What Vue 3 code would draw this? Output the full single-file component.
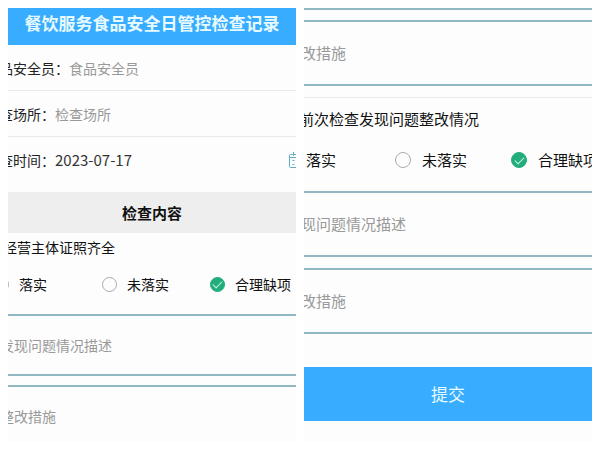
<template>
  <main class="page">
    <form class="panel" @submit.prevent>
      <h1 class="title">餐饮服务食品安全日管控检查记录</h1>

      <div v-for="f in fields" :key="f.id" class="field">
        <label :for="f.id">{{ f.label }}：</label>
        <input :id="f.id" v-model="form[f.id]" type="text" :placeholder="f.label" />
      </div>
      <div class="field date">
        <label for="fecha">检查时间：</label>
        <input id="fecha" v-model="form.fecha" type="text" />
        <button type="button" class="cal" aria-label="选择日期">
          <svg viewBox="0 0 16 18" width="16" height="18" fill="none" stroke="#62adc0">
            <path d="M4.5 3.5H2.5a1 1 0 0 0-1 1v11a1 1 0 0 0 1 1h11a1 1 0 0 0 1-1v-11a1 1 0 0 0-1-1h-9" />
            <path d="M1.5 6.5h13M5.5 1v4M10.5 1v4" />
            <path d="M4.5 9.5h2M8 9.5h2M11 9.5h2M4.5 13.5h2M8 13.5h2M11 13.5h2" />
          </svg>
        </button>
      </div>

      <h2 class="band">检查内容</h2>

      <fieldset class="item">
        <legend>经营主体证照齐全</legend>
        <div class="options">
          <label v-for="o in options" :key="o">
            <input v-model="form.licencia" type="radio" name="licencia" :value="o" />{{ o }}
          </label>
        </div>
      </fieldset>
      <textarea v-model="form.problema1" class="note" rows="1" placeholder="发现问题情况描述" aria-label="发现问题情况描述"></textarea>
      <textarea v-model="form.medida1" class="note" rows="1" placeholder="整改措施" aria-label="整改措施"></textarea>
    </form>

    <form class="panel large" @submit.prevent>
      <div class="edge"></div>
      <textarea v-model="form.medida2" class="note" rows="1" placeholder="整改措施" aria-label="整改措施"></textarea>

      <div class="ruled">
        <fieldset class="item">
          <legend>前次检查发现问题整改情况</legend>
          <div class="options">
            <label v-for="o in options" :key="o">
              <input v-model="form.anterior" type="radio" name="anterior" :value="o" />{{ o }}
            </label>
          </div>
        </fieldset>
      </div>
      <textarea v-model="form.problema3" class="note" rows="1" placeholder="发现问题情况描述" aria-label="发现问题情况描述"></textarea>
      <textarea v-model="form.medida3" class="note" rows="1" placeholder="整改措施" aria-label="整改措施"></textarea>
      <button type="submit" class="submit">提交</button>
    </form>
  </main>
</template>

<script setup>
import { reactive } from 'vue'

const fields = [
  { id: 'oficial', label: '食品安全员' },
  { id: 'lugar', label: '检查场所' },
]
const options = ['落实', '未落实', '合理缺项']

const form = reactive({
  oficial: '',
  lugar: '',
  fecha: '2023-07-17',
  licencia: '合理缺项',
  anterior: '合理缺项',
  problema1: '',
  medida1: '',
  medida2: '',
  problema3: '',
  medida3: '',
})
</script>

<style>
body{margin:0;background:#fff}
</style>

<style scoped>
*{box-sizing:border-box}
.page{
  display:grid;
  grid-template-columns:1fr 1fr;
  gap:8px;
  height:100vh;
  padding:8px;
  overflow:hidden;
  color:#222;
  font:14px/20px "Noto Sans CJK SC",sans-serif;
}
.panel{min-width:0;overflow:hidden;background:#fdfdfd}
.large{font-size:15px}
input,textarea,button{font:inherit;color:inherit;border:0;border-radius:0;background:none;padding:0;margin:0;outline:0}
::placeholder{color:#999;opacity:1}

.title{margin:0;padding-bottom:8px;background:#38acff;color:#e6faff;font-size:17px;line-height:29px;font-weight:700;text-align:center}

/* las filas empiezan fuera del borde izquierdo del panel */
.field{display:flex;align-items:center;margin-left:-23px;height:46px;border-bottom:1px solid #e9e9e9}
.field label{flex:none}
.field input{flex:1;min-width:0}
.date{height:45px;margin-bottom:10px;border-bottom:0}
.date input{font-size:15px;color:#333}
.cal{flex:none;display:flex;margin-right:-8px;cursor:pointer}

.band{margin:0;background:#eee;color:#111;font-size:15px;line-height:41px;font-weight:700;text-align:center}

.item{border:0;margin:0;padding:0;min-width:0;color:#111}
.item legend{padding:0;margin-left:-5px;line-height:28px}
.options{display:grid;grid-template-columns:repeat(3,1fr);height:46px;margin:0 -22px 7px -14px}
.options label{display:flex;align-items:center;gap:10px;white-space:nowrap;cursor:pointer}
.options input{
  appearance:none;
  flex:none;
  display:grid;
  place-items:center;
  width:15px;
  height:15px;
  border:1px solid #aaa;
  border-radius:50%;
  cursor:pointer;
}
.options input:checked{background:#22ad7c;border-color:#22ad7c}
.options input:checked::after{
  content:"";
  width:8px;
  height:4px;
  margin-bottom:2px;
  border:solid #c9f5e4;
  border-width:0 0 1px 1px;
  transform:rotate(-45deg);
}

.note{
  display:block;
  width:100%;
  height:62px;
  padding:19px 0;
  border:solid #8fb8c2;
  border-width:2px 0;
  text-indent:-8px;
  resize:none;
  overflow:hidden;
}
.note + .note{margin-top:9px}

.edge{height:2px;margin-bottom:10px;background:#8fb8c2}
.large .note{height:66px;padding:21px 0;text-indent:-18px}
.large .note + .note{margin-top:11px}
.ruled{margin-top:11px;border-top:1px solid #e9e9e9}
.large .item legend{line-height:42px}
.large .options{height:40px;margin:0 -35px 11px -25px}
.large .options label{gap:11px}
.large .options input{width:16px;height:16px}

.submit{display:block;width:100%;height:54px;margin-top:33px;background:#38acff;color:#e6faff;font-size:17px;cursor:pointer}
</style>
